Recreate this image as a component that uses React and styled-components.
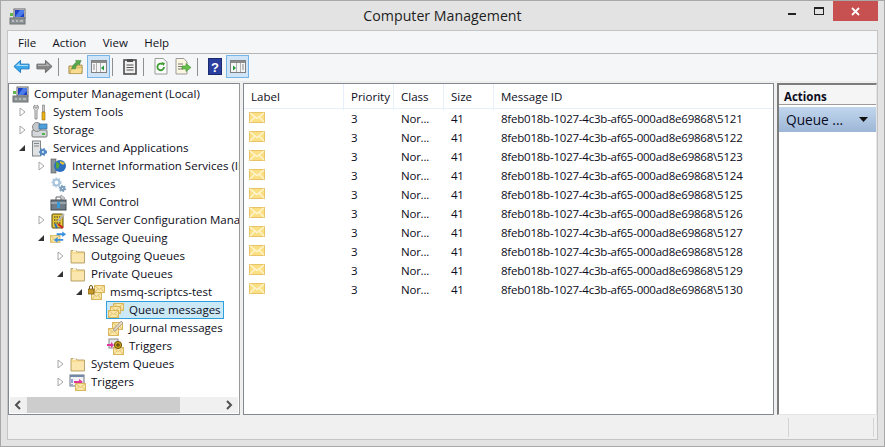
import React from 'react';
import styled, { createGlobalStyle } from 'styled-components';

const GlobalStyle = createGlobalStyle`
  html, body { margin: 0; padding: 0; background: #e3e3e3; }
  body { font-family: "Open Sans", "Noto Sans", sans-serif; font-size: 11.5px; color: #0c0c20; }
`;

const Window = styled.div`
  width: 885px;
  height: 447px;
  box-sizing: border-box;
  border: 1px solid #a8a8a8;
  background: #e3e3e3;
  display: flex;
  flex-direction: column;
  overflow: hidden;
`;

const TitleBar = styled.div`
  height: 29px;
  flex: none;
  display: flex;
  align-items: flex-start;
  position: relative;
  padding-left: 8px;
`;

const AppIcon = styled.div`
  margin-top: 7px;
  height: 17px;
`;

const Title = styled.div`
  position: absolute;
  left: 0;
  right: 0;
  top: 5px;
  text-align: center;
  font-size: 14.2px;
  line-height: 20px;
  color: #1e1e1e;
`;

const WinButtons = styled.div`
  margin-left: auto;
  margin-right: 6px;
  display: flex;
`;

const WinButton = styled.div`
  width: ${p => p.$w}px;
  height: 20px;
  display: flex;
  align-items: center;
  justify-content: center;
  background: ${p => p.$bg || 'transparent'};
`;

const Client = styled.div`
  flex: 1;
  margin: 0 6px 6px 6px;
  border: 1px solid #c4c4c4;
  display: flex;
  flex-direction: column;
  min-height: 0;
`;

const MenuBar = styled.div`
  height: 22px;
  flex: none;
  display: flex;
  align-items: center;
  padding-left: 10px;
  gap: 16.4px;
  background: #f5f6f7;
  border-bottom: 1px solid #b4b4b4;
`;

const MenuItem = styled.span`
  color: #101020;
`;

const ToolBar = styled.div`
  height: 25px;
  flex: none;
  display: flex;
  align-items: center;
  padding: 0 0 2px 2px;
  background: #f5f6f7;
  border-bottom: 1px solid #ececec;
`;

const ToolButton = styled.div`
  width: 23px;
  height: 23px;
  box-sizing: border-box;
  display: flex;
  align-items: center;
  justify-content: center;
  background: ${p => p.$active ? '#cfe4f6' : 'transparent'};
  border: 1px solid ${p => p.$active ? '#75b5e8' : 'transparent'};
`;

const ToolSep = styled.div`
  width: 1px;
  height: 18px;
  background: #8f8f8f;
  margin: 0 5px 0 2px;
`;

const Panes = styled.div`
  flex: 1;
  display: flex;
  min-height: 0;
  background: #f0f0f0;
  padding-top: 1px;
`;

const TreePane = styled.div`
  width: 232px;
  flex: none;
  box-sizing: border-box;
  border: 1px solid #828790;
  border-right-color: #9a9a9a;
  background: #fff;
  display: flex;
  flex-direction: column;
  overflow: hidden;
`;

const TreeBody = styled.div`
  flex: 1;
  min-height: 0;
  overflow: hidden;
  padding-top: 1px;
`;

const TreeRow = styled.div`
  height: 18px;
  display: flex;
  align-items: center;
  padding-left: ${p => p.$level * 19 + 2}px;
  white-space: nowrap;
`;

const Twisty = styled.div`
  width: 19px;
  margin-left: -19px;
  display: flex;
  justify-content: center;
  flex: none;
  padding-left: 3px;
  box-sizing: border-box;
`;

const NodeContent = styled.div`
  height: 18px;
  box-sizing: border-box;
  display: flex;
  align-items: center;
  padding-right: 2px;
  border: 1px solid ${p => p.$selected ? '#2fa0dc' : 'transparent'};
  background: ${p => p.$selected ? '#cbe8f6' : 'transparent'};
`;

const NodeIcon = styled.div`
  width: 17px;
  height: 16px;
  flex: none;
  display: flex;
  align-items: center;
  justify-content: center;
`;

const NodeLabel = styled.span`
  margin-left: 5px;
  line-height: 16px;
`;

const ScrollBar = styled.div`
  height: 16px;
  flex: none;
  margin: 0 1px 1px 1px;
  background: #f0f0f0;
  display: flex;
  align-items: center;
  justify-content: space-between;
  padding: 0 5px 0 4px;
  position: relative;
`;

const ScrollThumb = styled.div`
  position: absolute;
  left: 17px;
  top: 0;
  bottom: 0;
  width: 153px;
  background: #cdcdcd;
`;

const ListPane = styled.div`
  width: 531px;
  flex: none;
  margin-left: 3px;
  box-sizing: border-box;
  border: 1px solid #828790;
  background: #fff;
  overflow: hidden;
`;

const Columns = styled.div`
  display: grid;
  grid-template-columns: 100px 50px 50px 50px 1fr;
`;

const HeadRow = styled(Columns)`
  height: 25px;
  box-sizing: border-box;
  border-bottom: 1px solid #e6effa;
`;

const HeadCell = styled.div`
  padding-left: 7px;
  line-height: 26px;
  border-right: 1px solid #e6effa;
  &:last-child { border-right: none; }
`;

const MsgRow = styled(Columns)`
  height: 19px;
  align-items: center;
`;

const MsgCell = styled.div`
  padding-left: 7px;
  line-height: 19px;
  white-space: nowrap;
  letter-spacing: -0.22px;
`;

const EnvelopeCell = styled.div`
  padding-left: 5px;
  height: 19px;
  margin-top: -1px;
  display: flex;
  align-items: flex-start;
  padding-top: 3px;
  box-sizing: border-box;
`;

const ActionsPane = styled.div`
  width: 100px;
  flex: none;
  margin-left: 3px;
  box-sizing: border-box;
  background: #fff;
  border: 1px solid #e4e4e4;
  border-left: 2px solid #7c7c7c;
  border-top: 2px solid #7c7c7c;
`;

const ActionsHead = styled.div`
  height: 20px;
  box-sizing: border-box;
  padding: 3px 0 0 5px;
  font-weight: 700;
  line-height: 17px;
  background: #f5f5f5;
  border-bottom: 1px solid #9c9c9c;
`;

const ActionBar = styled.div`
  margin-top: 2px;
  height: 25px;
  display: flex;
  align-items: center;
  justify-content: space-between;
  padding: 0 8px 0 7px;
  font-size: 13.7px;
  background: linear-gradient(#c2d7ee, #9db6d6);
  color: #0a0a1e;
`;

const StatusBar = styled.div`
  height: 24px;
  flex: none;
  box-sizing: border-box;
  background: #f0f0f0;
  display: grid;
  grid-template-columns: 781px 85px 1fr;
  padding: 3px 0 2px 0;
`;

const StatusCell = styled.div`
  border-right: 1px solid #d4d4d4;
`;

// ---- icons ----
const Arrow = ({ open }) => open
  ? <svg width="8" height="8" viewBox="0 0 8 8"><path d="M1 7 L7 7 L7 1 Z" fill="#333" /></svg>
  : <svg width="7" height="10" viewBox="0 0 7 10"><path d="M1 1 L6 5 L1 9 Z" fill="#fff" stroke="#a6a6a6" /></svg>;

const Computer = () => (
  <svg width="17" height="17" viewBox="0 0 17 17">
    <rect x="5" y="1" width="11" height="9" fill="#e8e8f0" stroke="#666" />
    <rect x="6" y="2" width="9" height="7" fill="#1c3fc4" />
    <path d="M6 9 L11 2 L15 2 L15 5 L11 9Z" fill="#4b7be8" />
    <path d="M1 5h3v3H1z" fill="#5fb94a" />
    <rect x="1" y="10" width="15" height="6" fill="#8c9294" stroke="#6e7375" />
    <path d="M3 13h2M7 13h2M11 13h3" stroke="#e4e4e4" />
  </svg>
);

const Folder = () => (
  <svg width="16" height="15" viewBox="0 0 16 15">
    <path d="M1 3 L1 1.5 L6 1.5 L7 3 L14.5 3 L14.5 14 L1 14 Z" fill="#f8dc90" stroke="#b9a574" />
    <path d="M2 5h12v8H2z" fill="#fbe7ad" />
    <path d="M3 1h3v2H3z" fill="#fff" opacity=".7" />
  </svg>
);

const Envelope = ({ x = 0, y = 0 }) => (
  <g transform={`translate(${x} ${y})`}>
    <rect x=".5" y=".5" width="10" height="7" fill="#fbe8a8" stroke="#d9b65b" />
    <path d="M.5 .5 L5.5 4.5 L10.5 .5 M.5 7.5 L4 3.5 M10.5 7.5 L7 3.5" fill="none" stroke="#e0c070" />
  </g>
);

const ListEnvelope = () => (
  <svg width="16" height="12" viewBox="0 0 16 12">
    <rect x=".5" y=".5" width="15" height="10" fill="#fbdf84" stroke="#e8c468" />
    <path d="M1 1 L8 6.5 L15 1 M1 10 L6 5 M15 10 L10 5" fill="none" stroke="#fef6d2" strokeWidth="1.4" />
  </svg>
);

const Tools = () => (
  <svg width="17" height="17" viewBox="0 0 17 17">
    <path d="M4 1 L4 4 L6 4 L6 1 C8 2 8 5 6 6 L6 15 L4 15 L4 6 C2 5 2 2 4 1Z" fill="#e8e8e8" stroke="#777" strokeWidth=".8" />
    <path d="M11.5 1 h2 v7 h-2z" fill="#c9c9c9" stroke="#777" strokeWidth=".6" />
    <path d="M11 8 h3 v8 h-3z" fill="#eeb416" stroke="#8e6a0b" strokeWidth=".6" />
  </svg>
);

const Storage = () => (
  <svg width="17" height="17" viewBox="0 0 17 17">
    <rect x="1" y="8" width="15" height="7" rx="1" fill="#d5d8da" stroke="#777" />
    <circle cx="6" cy="5" r="4.5" fill="#c6c9cc" stroke="#888" />
    <rect x="8" y="2" width="8" height="5" fill="#4ea0dc" stroke="#3a6a96" strokeWidth=".7" />
    <rect x="11" y="11" width="3" height="2" fill="#4cb84c" />
  </svg>
);

const Gear = ({ x = 8, y = 8, r = 4, c = '#4f86c4' }) => (
  <g>
    <circle cx={x} cy={y} r={r} fill="none" stroke={c} strokeWidth="2.2" />
    <circle cx={x} cy={y} r={r + 1.4} fill="none" stroke={c} strokeWidth="1.2" strokeDasharray="1.6 1.6" />
  </g>
);

const ServicesApps = () => (
  <svg width="17" height="17" viewBox="0 0 17 17">
    <rect x="1.5" y="1" width="8" height="15" fill="#dfe1e2" stroke="#80868a" />
    <path d="M3 3.5h5M3 6h5" stroke="#80868a" />
    <Gear x={12} y={12} r={2} />
  </svg>
);

const Iis = () => (
  <svg width="17" height="17" viewBox="0 0 17 17">
    <rect x="1" y="1" width="5" height="14" fill="#8d969c" stroke="#555" strokeWidth=".6" />
    <circle cx="10" cy="8" r="6" fill="#2c6fc0" />
    <path d="M6 4 C9 4 10 7 9 9 C8 12 7 11 6 9Z" fill="#57a83b" />
    <path d="M10 3 L15 5 L13 7 L10 5Z" fill="#e3c43a" />
  </svg>
);

const Services = () => (
  <svg width="17" height="17" viewBox="0 0 17 17">
    <Gear x={6.5} y={6.5} r={3} c="#a8c4dc" />
    <Gear x={12.5} y={12.5} r={1.7} c="#7f9fbc" />
  </svg>
);

const Wmi = () => (
  <svg width="17" height="17" viewBox="0 0 17 17">
    <rect x="1" y="6" width="15" height="10" fill="#6f7c88" stroke="#3f4a52" />
    <path d="M1 9h15" stroke="#c3cbd2" />
    <path d="M6 6 V3 h5 v3" fill="none" stroke="#666" />
    <rect x="7" y="8" width="3" height="6" fill="#3a9ad9" />
    <path d="M11 1 l4 3 -2 2 -3-3z" fill="#ccc" stroke="#777" strokeWidth=".5" />
  </svg>
);

const Sql = () => (
  <svg width="17" height="17" viewBox="0 0 17 17">
    <rect x="2" y="2" width="11" height="14" rx="1" fill="#e7c93a" stroke="#5b4b10" />
    <path d="M4 5h7M4 8h7M4 11h7" stroke="#222" strokeDasharray="1.5 1" />
    <path d="M8 9 l6-7" stroke="#b8b8b8" strokeWidth="2" />
    <path d="M8 12 L13 16" stroke="#c22" strokeWidth="2" />
    <path d="M5 12 l2 4" stroke="#2a6ec0" strokeWidth="2" />
  </svg>
);

const MessageQueuing = () => (
  <svg width="18" height="17" viewBox="0 0 18 17">
    <Envelope x={0} y={5} />
    <path d="M7 6 h6 V4 l4 3 -4 3 V8 H7z" fill="#3a90dc" transform="translate(0 -3)" />
    <path d="M13 11 H7 V9 l-4 3 4 3 v-2 h6z" fill="#3a90dc" transform="translate(1 -2)" />
  </svg>
);

const QueueGroup = () => (
  <svg width="17" height="17" viewBox="0 0 17 17">
    <Envelope x={6} y={1} />
    <Envelope x={3} y={4} />
    <Envelope x={1} y={8} />
  </svg>
);

const LockedQueue = () => (
  <svg width="17" height="17" viewBox="0 0 17 17">
    <Envelope x={6} y={1} />
    <Envelope x={3} y={8} />
    <rect x="0" y="5" width="6" height="5" fill="#c79a2b" stroke="#6f5314" strokeWidth=".7" />
    <path d="M1.5 5 V3 a1.5 1.5 0 0 1 3 0 V5" fill="none" stroke="#6f5314" />
  </svg>
);

const Journal = () => (
  <svg width="17" height="17" viewBox="0 0 17 17">
    <Envelope x={5} y={2} />
    <Envelope x={1} y={8} />
    <path d="M6 10 L14 1 L16 3 L8 11 Z" fill="#e5d5c0" stroke="#888" strokeWidth=".6" />
  </svg>
);

const QueueTriggers = () => (
  <svg width="17" height="17" viewBox="0 0 17 17">
    <rect x="2" y="1" width="9" height="9" fill="#e6e6e6" stroke="#8b8b8b" />
    <Envelope x={6} y={9} />
    <path d="M0 6 h4 V4 l3 3 -3 3 V8 H0z" fill="#e0359e" />
    <circle cx="11" cy="7" r="3.6" fill="#cda21c" stroke="#6a5208" />
    <path d="M9 7h4M11 5v4" stroke="#4a3a08" />
  </svg>
);

const SysTriggers = () => (
  <svg width="17" height="17" viewBox="0 0 17 17">
    <rect x="1" y="1" width="14" height="11" fill="#f2f2f4" stroke="#6d7480" />
    <rect x="1" y="1" width="14" height="2" fill="#7188a6" />
    <path d="M3 5v4M3 10v1" stroke="#3b4fbf" />
    <path d="M5 7 h5 V5 l4 3 -4 3 V9 H5z" fill="#e0359e" />
    <Envelope x={6} y={9} />
  </svg>
);

const ToolBack = () => (
  <svg width="17" height="15" viewBox="0 0 18 15">
    <path d="M8 1 L1 7.5 L8 14 V10 H17 V5 H8 Z" fill="#39a8ec" stroke="#1f77c0" />
    <path d="M7 3.5 L3 7 H16 V6 H7Z" fill="#a4dbfb" />
  </svg>
);

const ToolForward = () => (
  <svg width="17" height="15" viewBox="0 0 18 15">
    <path d="M10 1 L17 7.5 L10 14 V10 H1 V5 H10 Z" fill="#868686" stroke="#676767" />
    <path d="M11 3.5 L15 7 H2 V6 H11Z" fill="#b5b5b5" />
  </svg>
);

const ToolUp = () => (
  <svg width="15" height="17" viewBox="0 0 16 17">
    <path d="M1 8 h5 l1 -1 h8 v9 H1z" fill="#f4d27c" stroke="#a08a50" />
    <path d="M2 16 L4 10 H15.5 L14 16Z" fill="#f8dc90" stroke="#b49a58" strokeWidth=".6" />
    <path d="M4 11 C5 7 7 5 9 4 L8 2 L14 2 L12 7 L11 5.5 C9 7 8 9 8 11Z" fill="#56a84a" stroke="#2f7a2a" strokeWidth=".5" />
  </svg>
);

const PaneGlyph = ({ right }) => (
  <svg width="16" height="13" viewBox="0 0 16 13">
    <rect x=".5" y=".5" width="15" height="12" fill="#f5f5f5" stroke="#808080" />
    <rect x="1" y="1" width="14" height="2" fill="#8c8c8c" />
    {right ? (
      <>
        <path d="M6.5 3v9M10.5 3v9" stroke="#b0b0b0" />
        <path d="M3 5.5 L6 8 L3 10.5Z" fill="#1f9a3a" />
        <path d="M12 5h2M12 7h2M12 9h2" stroke="#8a8a8a" />
      </>
    ) : (
      <>
        <path d="M5.5 3v9M9.5 3v9" stroke="#b0b0b0" />
        <path d="M2 5h2M2 7h2M2 9h2" stroke="#8a8a8a" />
        <path d="M13 5.5 L10 8 L13 10.5Z" fill="#1f9a3a" />
      </>
    )}
  </svg>
);

const ToolClipboard = () => (
  <svg width="14" height="17" viewBox="0 0 14 17">
    <rect x="1" y="2" width="12" height="14" fill="#f0f0f0" stroke="#4d4d4d" strokeWidth="1.6" />
    <rect x="4" y="1" width="6" height="3" fill="#4d4d4d" />
    <path d="M3.5 7h7M3.5 9.5h7M3.5 12h7" stroke="#555" />
  </svg>
);

const ToolRefresh = () => (
  <svg width="14" height="17" viewBox="0 0 14 17">
    <path d="M1 .5 H9 L13 4 V16 H1 Z" fill="#fbfbfb" stroke="#9b9b9b" />
    <path d="M10 9 a3.3 3.3 0 1 1 -1.2 -2.6" fill="none" stroke="#3f9c32" strokeWidth="1.8" />
    <path d="M7.5 4 L11 5 L9.5 8Z" fill="#3f9c32" />
  </svg>
);

const ToolExport = () => (
  <svg width="17" height="17" viewBox="0 0 17 17">
    <path d="M1 .5 H9 L12 4 V16 H1 Z" fill="#fbf6df" stroke="#9b9b9b" />
    <path d="M3 6h5M3 8.5h4M3 11h5" stroke="#777" />
    <path d="M7 8 h4 V5.5 L16 9.5 L11 13.5 V11 H7Z" fill="#64c04a" stroke="#3d8f2d" strokeWidth=".6" />
  </svg>
);

const ToolHelp = () => (
  <svg width="14" height="17" viewBox="0 0 14 17">
    <rect x=".5" y=".5" width="13" height="16" fill="#2a3f9e" stroke="#1a2a70" />
    <text x="7" y="13.5" textAnchor="middle" fontSize="13" fontWeight="700" fill="#fff" fontFamily="Liberation Sans">?</text>
  </svg>
);

const treeNodes = [
  { level: 0, icon: <Computer />, text: 'Computer Management (Local)' },
  { level: 1, twisty: 'closed', icon: <Tools />, text: 'System Tools' },
  { level: 1, twisty: 'closed', icon: <Storage />, text: 'Storage' },
  { level: 1, twisty: 'open', icon: <ServicesApps />, text: 'Services and Applications' },
  { level: 2, twisty: 'closed', icon: <Iis />, text: 'Internet Information Services (IIS) Manager' },
  { level: 2, icon: <Services />, text: 'Services' },
  { level: 2, icon: <Wmi />, text: 'WMI Control' },
  { level: 2, twisty: 'closed', icon: <Sql />, text: 'SQL Server Configuration Manager' },
  { level: 2, twisty: 'open', icon: <MessageQueuing />, text: 'Message Queuing' },
  { level: 3, twisty: 'closed', icon: <Folder />, text: 'Outgoing Queues' },
  { level: 3, twisty: 'open', icon: <Folder />, text: 'Private Queues' },
  { level: 4, twisty: 'open', icon: <LockedQueue />, text: 'msmq-scriptcs-test' },
  { level: 5, icon: <QueueGroup />, text: 'Queue messages', selected: true },
  { level: 5, icon: <Journal />, text: 'Journal messages' },
  { level: 5, icon: <QueueTriggers />, text: 'Triggers' },
  { level: 3, twisty: 'closed', icon: <Folder />, text: 'System Queues' },
  { level: 3, twisty: 'closed', icon: <SysTriggers />, text: 'Triggers' },
];

const messageIds = [5121, 5122, 5123, 5124, 5125, 5126, 5127, 5128, 5129, 5130];

export default function App() {
  return (
    <>
      <GlobalStyle />
      <Window>
        <TitleBar>
          <AppIcon><Computer /></AppIcon>
          <Title>Computer Management</Title>
          <WinButtons>
            <WinButton $w={27}>
              <svg width="9" height="9" viewBox="0 0 9 9"><rect y="6" width="8" height="2" fill="#222" /></svg>
            </WinButton>
            <WinButton $w={27}>
              <svg width="11" height="9" viewBox="0 0 11 9"><rect x=".5" y=".5" width="9" height="7" fill="none" stroke="#222" /><rect width="10" height="2" fill="#222" /></svg>
            </WinButton>
            <WinButton $w={45} $bg="#c75050">
              <svg width="9" height="9" viewBox="0 0 9 9"><path d="M1 1 L8 8 M8 1 L1 8" stroke="#fff" strokeWidth="1.8" /></svg>
            </WinButton>
          </WinButtons>
        </TitleBar>
        <Client>
          <MenuBar>
            <MenuItem>File</MenuItem>
            <MenuItem>Action</MenuItem>
            <MenuItem>View</MenuItem>
            <MenuItem>Help</MenuItem>
          </MenuBar>
          <ToolBar>
            <ToolButton><ToolBack /></ToolButton>
            <ToolButton><ToolForward /></ToolButton>
            <ToolSep />
            <ToolButton><ToolUp /></ToolButton>
            <ToolButton $active><PaneGlyph /></ToolButton>
            <ToolSep />
            <ToolButton><ToolClipboard /></ToolButton>
            <ToolSep />
            <ToolButton><ToolRefresh /></ToolButton>
            <ToolButton><ToolExport /></ToolButton>
            <ToolSep />
            <ToolButton><ToolHelp /></ToolButton>
            <ToolButton $active><PaneGlyph right /></ToolButton>
          </ToolBar>
          <Panes>
            <TreePane>
              <TreeBody>
                {treeNodes.map((n, i) => (
                  <TreeRow key={i} $level={n.level}>
                    {n.level > 0 && <Twisty>{n.twisty && <Arrow open={n.twisty === 'open'} />}</Twisty>}
                    <NodeContent $selected={n.selected}>
                      <NodeIcon>{n.icon}</NodeIcon>
                      <NodeLabel>{n.text}</NodeLabel>
                    </NodeContent>
                  </TreeRow>
                ))}
              </TreeBody>
              <ScrollBar>
                <svg width="8" height="10" viewBox="0 0 8 10"><path d="M6 1 L2 5 L6 9" fill="none" stroke="#505050" strokeWidth="2" /></svg>
                <ScrollThumb />
                <svg width="8" height="10" viewBox="0 0 8 10"><path d="M2 1 L6 5 L2 9" fill="none" stroke="#505050" strokeWidth="2" /></svg>
              </ScrollBar>
            </TreePane>
            <ListPane>
              <HeadRow>
                <HeadCell>Label</HeadCell>
                <HeadCell>Priority</HeadCell>
                <HeadCell>Class</HeadCell>
                <HeadCell>Size</HeadCell>
                <HeadCell>Message ID</HeadCell>
              </HeadRow>
              {messageIds.map(id => (
                <MsgRow key={id}>
                  <EnvelopeCell><ListEnvelope /></EnvelopeCell>
                  <MsgCell>3</MsgCell>
                  <MsgCell>Nor...</MsgCell>
                  <MsgCell>41</MsgCell>
                  <MsgCell>8feb018b-1027-4c3b-af65-000ad8e69868\{id}</MsgCell>
                </MsgRow>
              ))}
            </ListPane>
            <ActionsPane>
              <ActionsHead>Actions</ActionsHead>
              <ActionBar>
                <span>Queue ...</span>
                <svg width="9" height="5" viewBox="0 0 9 5"><path d="M0 0 H9 L4.5 5Z" fill="#111" /></svg>
              </ActionBar>
            </ActionsPane>
          </Panes>
          <StatusBar>
            <StatusCell />
            <StatusCell />
          </StatusBar>
        </Client>
      </Window>
    </>
  );
}
